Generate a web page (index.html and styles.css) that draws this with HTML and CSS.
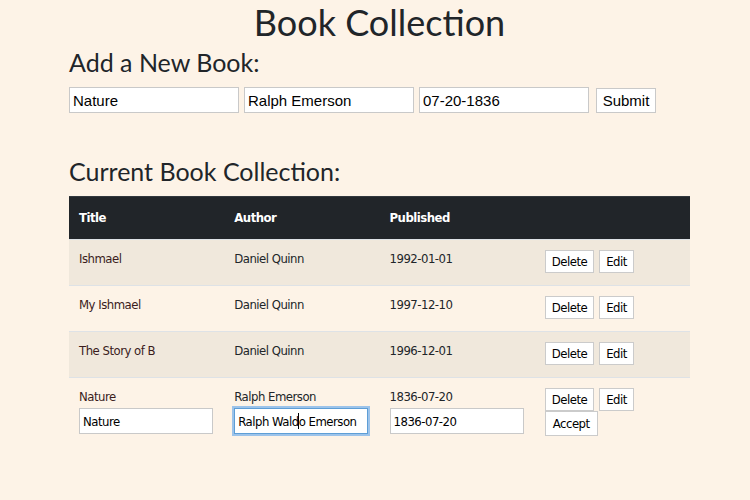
FILE: index.html
```html
<!DOCTYPE html>
<html>
<head>
<meta charset="utf-8">
<link rel="stylesheet" href="styles.css">
</head>
<body>
<div class="page">
  <h1 class="title">Book Collection</h1>
  <h2 class="heading">Add a New Book:</h2>
  <form class="add-form">
    <input class="add-input" type="text" value="Nature">
    <input class="add-input" type="text" value="Ralph Emerson">
    <input class="add-input" type="text" value="07-20-1836">
    <button class="submit" type="button">Submit</button>
  </form>
  <h2 class="heading current">Current Book Collection:</h2>
  <table class="books">
    <thead>
      <tr><th>Title</th><th>Author</th><th>Published</th><th></th></tr>
    </thead>
    <tbody>
      <tr class="striped">
        <td class="t">Ishmael</td><td>Daniel Quinn</td><td>1992-01-01</td>
        <td><button class="btn">Delete</button><button class="btn">Edit</button></td>
      </tr>
      <tr>
        <td class="t">My Ishmael</td><td>Daniel Quinn</td><td>1997-12-10</td>
        <td><button class="btn">Delete</button><button class="btn">Edit</button></td>
      </tr>
      <tr class="striped">
        <td class="t">The Story of B</td><td>Daniel Quinn</td><td>1996-12-01</td>
        <td><button class="btn">Delete</button><button class="btn">Edit</button></td>
      </tr>
      <tr class="editing">
        <td class="t"><div class="val">Nature</div><input class="edit-input" type="text" value="Nature"></td>
        <td><div class="val">Ralph Emerson</div><span class="focus-wrap"><input class="edit-input focused" type="text" value="Ralph Waldo Emerson"><span class="caret"></span></span></td>
        <td><div class="val">1836-07-20</div><input class="edit-input" type="text" value="1836-07-20"></td>
        <td><div class="btn-row"><button class="btn">Delete</button><button class="btn">Edit</button></div><div class="btn-row"><button class="btn accept">Accept</button></div></td>
      </tr>
    </tbody>
  </table>
</div>
</body>
</html>
```
FILE: styles.css
```css
html, body {
  margin: 0;
  padding: 0;
  background: #fdf3e7;
}
.page {
  width: 621px;
  margin-left: 69px;
  color: #212529;
}
.title {
  margin: 0;
  height: 44px;
  line-height: 44px;
  text-align: center;
  font-family: "Lato", sans-serif;
  font-weight: 400;
  font-size: 36px;
  color: #212529;
}
.heading {
  margin: 3px 0 0 0;
  font-family: "Lato", sans-serif;
  font-weight: 400;
  font-size: 25px;
  line-height: 30px;
  color: #212529;
}
.heading.current {
  margin-top: 43px;
  margin-bottom: 10px;
}
.add-form {
  display: flex;
  align-items: center;
  gap: 5px;
  margin-top: 10px;
}
.add-input {
  box-sizing: border-box;
  width: 170px;
  height: 26px;
  margin: 0;
  padding: 0 3px;
  border: 1px solid #c9c9c9;
  background: #fff;
  font-family: "Liberation Sans", Arial, sans-serif;
  font-size: 15px;
  color: #000;
}
.submit {
  box-sizing: border-box;
  height: 25px;
  width: 60px;
  margin-left: 2px;
  padding: 0;
  border: 1px solid #c9c9c9;
  background: #fff;
  font-family: "Liberation Sans", Arial, sans-serif;
  font-size: 15px;
  color: #000;
}
.books {
  width: 621px;
  border-collapse: collapse;
  table-layout: fixed;
  font-family: "DejaVu Sans Condensed", "DejaVu Sans", sans-serif;
  font-stretch: condensed;
  font-size: 13px;
  letter-spacing: -0.5px;
}
.books th {
  background: #212529;
  color: #fff;
  text-align: left;
  font-weight: 700;
  padding: 12px 10px;
  line-height: 18px;
  border-top: 1px solid #32383e;
}
.books td {
  padding: 9px 10px 12px 10px;
  vertical-align: top;
  line-height: 20px;
  border-top: 1px solid #dee2e6;
  color: #212529;
}
.books td.t {
  color: #3a1c1c;
}
.books tr.striped td {
  background: #f0e8dc;
}
.btn {
  box-sizing: border-box;
  height: 23px;
  margin: 1px 5px 0 0;
  padding: 0 6px;
  border: 1px solid #cbcbcb;
  background: #fff;
  font-family: inherit;
  font-stretch: condensed;
  font-size: 13px;
  letter-spacing: -0.5px;
  color: #000;
  vertical-align: top;
}
.btn.accept {
  height: 25px;
  padding: 0 7px;
}
.val {
  line-height: 20px;
}
.edit-input {
  box-sizing: border-box;
  width: 134px;
  height: 26px;
  margin: 1px 0 0 0;
  padding: 0 3px;
  border: 1px solid #c9c9c9;
  background: #fff;
  font-family: inherit;
  font-stretch: condensed;
  font-size: 13px;
  letter-spacing: -0.5px;
  color: #000;
}
.focus-wrap {
  position: relative;
  display: inline-block;
}
.edit-input.focused {
  border: 1px solid #5e9ed6;
  box-shadow: 0 0 0 2px #9cc3ea;
  outline: none;
}
.caret {
  position: absolute;
  left: 64px;
  top: 6px;
  width: 1px;
  height: 16px;
  background: #000;
}
.btn-row {
  display: flex;
  margin-top: 1px;
}
.btn-row .btn {
  margin-top: 0;
}
.btn-row + .btn-row {
  margin-top: 0;
}
```
